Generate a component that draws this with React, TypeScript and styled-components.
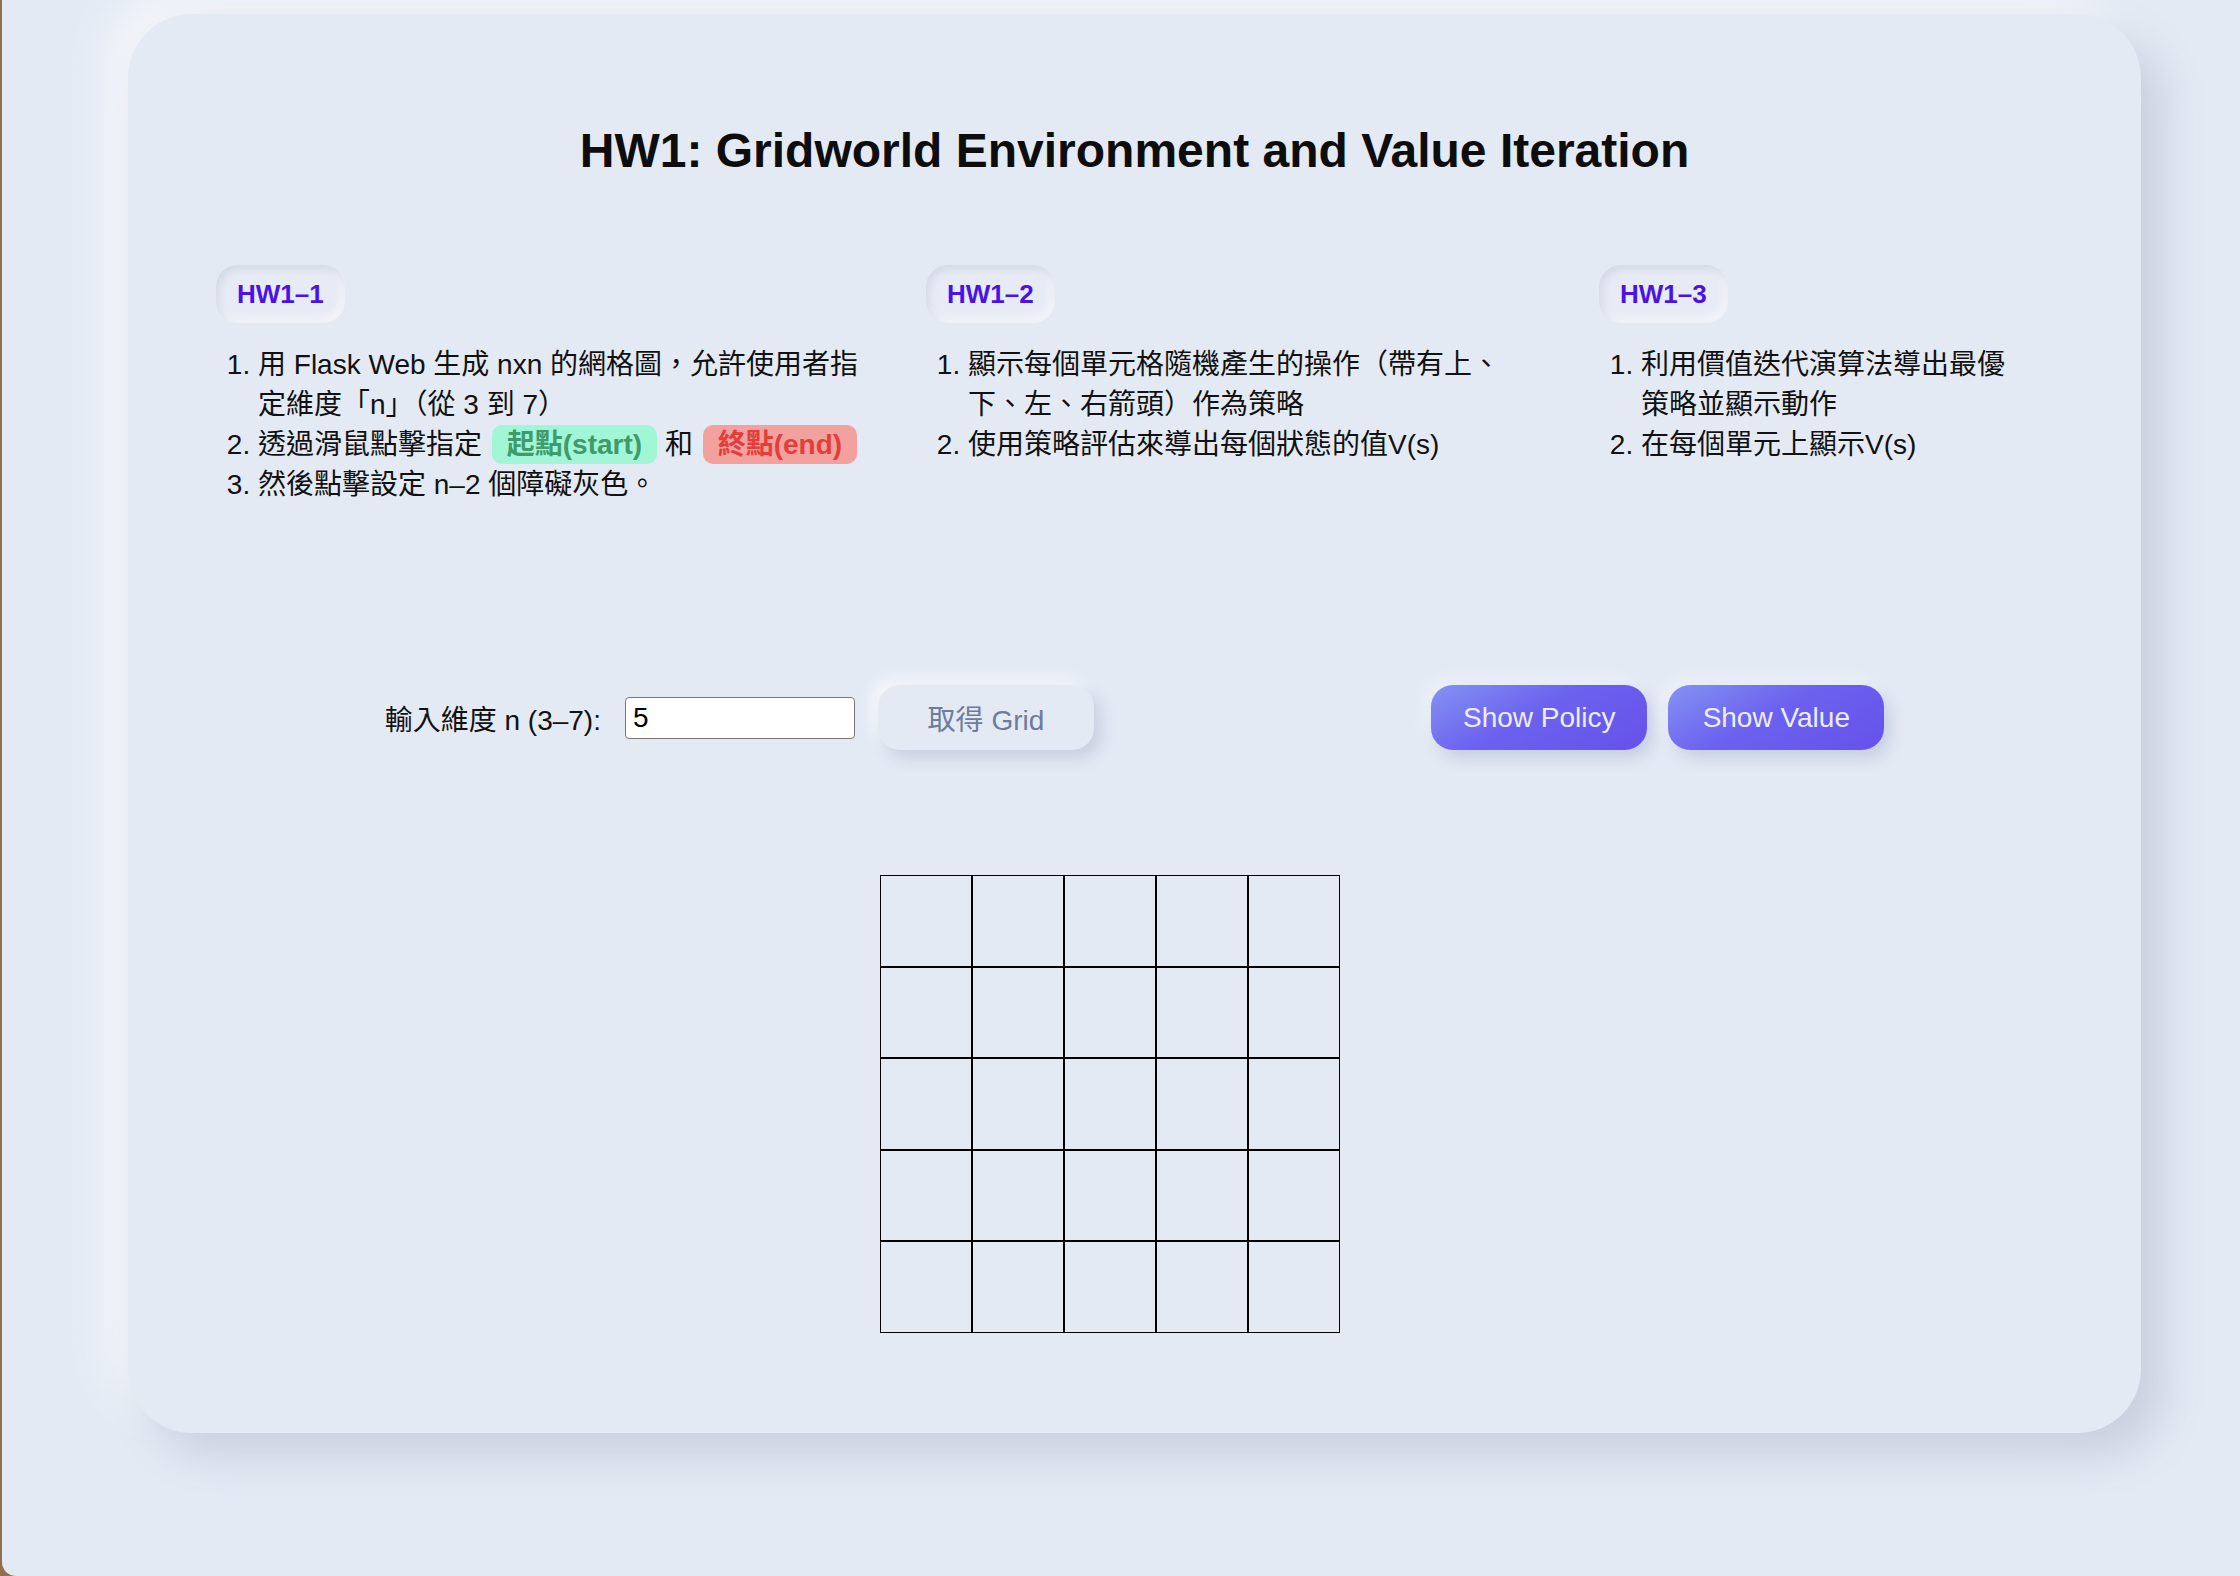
import React from "react";
import styled, { createGlobalStyle } from "styled-components";

const GlobalStyle = createGlobalStyle`
  html {
    background: #8f6f4c;
  }
  body {
    margin: 0;
    font-family: "Liberation Sans", "Noto Sans CJK TC", sans-serif;
    color: #111;
  }
`;

const Screen = styled.div`
  margin-left: 2px;
  min-height: 1576px;
  background: #e3eaf4;
  border-bottom-left-radius: 14px;
  padding-top: 14px;
  box-sizing: border-box;
  overflow: hidden;
`;

const Card = styled.main`
  margin-left: 126px;
  width: 2013px;
  box-sizing: border-box;
  padding: 88px 88px 100px;
  background: #e3eaf4;
  border-radius: 64px;
  box-shadow: 22px 22px 44px #c9d0dd, -22px -22px 44px #f4f6fa;
`;

const Title = styled.h1`
  margin: 21px 0 0;
  text-align: center;
  font-size: 48px;
  font-weight: 700;
  line-height: 55px;
  color: #0d0d0d;
`;

const Columns = styled.section`
  display: grid;
  grid-template-columns: 710px 673px 1fr;
  margin-top: 87px;
`;

const Column = styled.div<{ $w: number }>`
  width: ${(p) => p.$w}px;
`;

const Badge = styled.div`
  display: inline-block;
  padding: 12px 21px;
  font-size: 26px;
  line-height: 34px;
  font-weight: 700;
  color: #4a12e6;
  border-radius: 22px;
  background: #e7ebf5;
  box-shadow: inset 3px 4px 8px #d2d8e5, inset -3px -4px 8px #f7f8fc;
`;

const List = styled.ol`
  margin: 22px 0 0;
  padding-left: 42px;
  font-size: 28px;
  line-height: 40px;
`;

const Pill = styled.span<{ $tone: "green" | "red" }>`
  display: inline;
  padding: 4px 15px;
  margin-left: 2px;
  border-radius: 10px;
  font-weight: 700;
  background: ${(p) => (p.$tone === "green" ? "#a0f6d5" : "#f3a19f")};
  color: ${(p) => (p.$tone === "green" ? "#3f9a6c" : "#e23f3b")};
`;

const Controls = styled.section`
  display: flex;
  justify-content: space-around;
  align-items: center;
  margin-top: 180px;
`;

const Group = styled.div`
  display: flex;
  align-items: center;
`;

const Label = styled.label`
  font-size: 28px;
  color: #111;
  margin-right: 24px;
`;

const Input = styled.input`
  width: 230px;
  height: 42px;
  box-sizing: border-box;
  padding: 0 7px;
  border: 1.5px solid #777;
  border-radius: 4px;
  background: #fff;
  font-family: "Liberation Sans", sans-serif;
  font-size: 28px;
  color: #000;
  margin-right: 23px;
`;

const Button = styled.button<{ $primary?: boolean }>`
  width: 216px;
  height: 65px;
  border: none;
  border-radius: 22px;
  font-family: "Liberation Sans", "Noto Sans CJK TC", sans-serif;
  font-size: 28px;
  cursor: pointer;
  color: ${(p) => (p.$primary ? "#eceefe" : "#6e7b9b")};
  background: ${(p) =>
    p.$primary
      ? "linear-gradient(150deg, #8593f3 0%, #6c62ef 45%, #6552ea 100%)"
      : "#e3eaf4"};
  box-shadow: ${(p) =>
    p.$primary
      ? "6px 8px 16px #c6cde0, -6px -6px 14px #eef2f9"
      : "7px 8px 16px #c8cfdf, -7px -7px 14px #f6f8fc"};
  & + & {
    margin-left: 21px;
  }
`;

const GridWrap = styled.div`
  display: flex;
  justify-content: center;
  padding-right: 50px;
  margin-top: 125px;
`;

const Board = styled.div<{ $n: number }>`
  display: grid;
  grid-template-columns: repeat(${(p) => p.$n}, 92px);
  grid-auto-rows: 91.6px;
`;

const Cell = styled.div`
  border: 1px solid #000;
`;

export default function App() {
  const n = 5;
  return (
    <>
      <GlobalStyle />
      <Screen>
        <Card>
          <Title>HW1: Gridworld Environment and Value Iteration</Title>
          <Columns>
            <Column $w={657}>
              <Badge>HW1–1</Badge>
              <List>
                <li>用 Flask Web 生成 nxn 的網格圖，允許使用者指定維度「n」（從 3 到 7）</li>
                <li>
                  透過滑鼠點擊指定 <Pill $tone="green">起點(start)</Pill> 和{" "}
                  <Pill $tone="red">終點(end)</Pill>
                </li>
                <li>然後點擊設定 n–2 個障礙灰色。</li>
              </List>
            </Column>
            <Column $w={587}>
              <Badge>HW1–2</Badge>
              <List>
                <li>顯示每個單元格隨機產生的操作（帶有上、下、左、右箭頭）作為策略</li>
                <li>使用策略評估來導出每個狀態的值V(s)</li>
              </List>
            </Column>
            <Column $w={420}>
              <Badge>HW1–3</Badge>
              <List>
                <li>利用價值迭代演算法導出最優策略並顯示動作</li>
                <li>在每個單元上顯示V(s)</li>
              </List>
            </Column>
          </Columns>
          <Controls>
            <Group>
              <Label htmlFor="dim">輸入維度 n (3–7):</Label>
              <Input id="dim" type="text" defaultValue="5" />
              <Button>取得 Grid</Button>
            </Group>
            <Group>
              <Button $primary>Show Policy</Button>
              <Button $primary>Show Value</Button>
            </Group>
          </Controls>
          <GridWrap>
            <Board $n={n}>
              {Array.from({ length: n * n }).map((_, i) => (
                <Cell key={i} />
              ))}
            </Board>
          </GridWrap>
        </Card>
      </Screen>
    </>
  );
}
